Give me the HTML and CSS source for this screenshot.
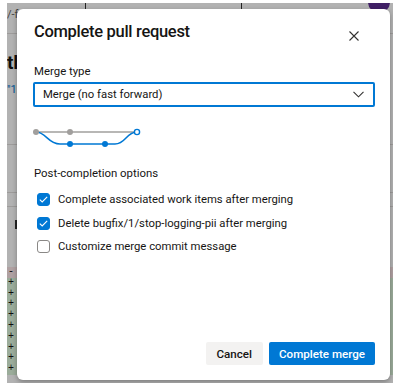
FILE: index.html
```html
<!DOCTYPE html>
<html lang="en">
<head>
  <meta charset="UTF-8">
  <meta name="viewport" content="width=device-width, initial-scale=1.0">
  <title>Complete pull request</title>
  <link rel="stylesheet" href="styles.css">
</head>
<body>
  <div class="screen">

    <!-- App underneath the modal -->
    <div class="app">
      <div class="app-top">
        <div class="tabs">
          <span class="tab"></span>
          <span class="tab wide"></span>
          <span class="avatar"></span>
        </div>
        <div class="app-path">/-feature</div>
      </div>
      <div class="app-title">the pull request</div>
      <div class="app-branch">"1/stop-logging-pii</div>
      <div class="app-row"></div>
      <div class="app-row"></div>
      <div class="app-row short"></div>
      <div class="app-files">
        <span class="file-mark"></span>
      </div>
      <div class="diff">
        <div class="line del">-</div>
        <div class="line add">+</div>
        <div class="line add">+</div>
        <div class="line add">+</div>
        <div class="line add">+</div>
        <div class="line add">+</div>
        <div class="line add">+</div>
        <div class="line add">+</div>
        <div class="line add">+</div>
        <div class="line add">+</div>
      </div>
    </div>

    <!-- Modal -->
    <div class="overlay">
      <div class="dialog">
        <div class="dialog-header">
          <h2>Complete pull request</h2>
          <button class="close" aria-label="Close">
            <svg width="10" height="10" viewBox="0 0 10 10">
              <path d="M0.5 0.5 L9.5 9.5 M9.5 0.5 L0.5 9.5" stroke="#323130" stroke-width="1.1" fill="none"/>
            </svg>
          </button>
        </div>

        <div class="label">Merge type</div>
        <div class="dropdown">
          <span>Merge (no fast forward)</span>
          <svg width="11" height="7" viewBox="0 0 11 7">
            <path d="M0.5 0.8 L5.5 5.8 L10.5 0.8" stroke="#323130" stroke-width="1.1" fill="none"/>
          </svg>
        </div>

        <svg class="merge-graph" width="110" height="26" viewBox="0 0 110 26">
          <path d="M3 10 L101 10" stroke="#a19f9d" stroke-width="1.3" fill="none"/>
          <path d="M3 10 C13 10 15 22 27 22 L82 22 C93 22 93 10 104 10" stroke="#0078d4" stroke-width="1.5" fill="none"/>
          <circle cx="3" cy="10" r="3" fill="#a19f9d"/>
          <circle cx="37" cy="10" r="3" fill="#a19f9d"/>
          <circle cx="37" cy="22" r="3" fill="#0078d4"/>
          <circle cx="72" cy="22" r="3" fill="#0078d4"/>
          <circle cx="104" cy="10" r="2.6" fill="#fff" stroke="#0078d4" stroke-width="1.4"/>
        </svg>

        <div class="label section">Post-completion options</div>

        <div class="options">
          <label class="option">
            <span class="box checked">
              <svg width="9" height="7" viewBox="0 0 9 7"><path d="M0.8 3.6 L3.2 5.9 L8.2 0.9" stroke="#fff" stroke-width="1.1" fill="none"/></svg>
            </span>
            Complete associated work items after merging
          </label>
          <label class="option">
            <span class="box checked">
              <svg width="9" height="7" viewBox="0 0 9 7"><path d="M0.8 3.6 L3.2 5.9 L8.2 0.9" stroke="#fff" stroke-width="1.1" fill="none"/></svg>
            </span>
            Delete bugfix/1/stop-logging-pii after merging
          </label>
          <label class="option">
            <span class="box"></span>
            Customize merge commit message
          </label>
        </div>

        <div class="dialog-footer">
          <button class="btn">Cancel</button>
          <button class="btn primary">Complete merge</button>
        </div>
      </div>
    </div>

  </div>
</body>
</html>
```

FILE: styles.css
```css
* {
  box-sizing: border-box;
}

body {
  margin: 0;
  background-color: #fff;
  font-family: Roboto, "Liberation Sans", sans-serif;
  color: #161514;
}

.screen {
  position: relative;
  margin: 3px 7px;
  height: 380px;
  overflow: hidden;
}

/* app behind the modal */
.app {
  background-color: #fff;
  height: 100%;
  font-size: 11px;
}

.app-top {
  height: 31px;
  border-bottom: 1px solid #e1dfdd;
}

.tabs {
  display: flex;
  align-items: flex-start;
  height: 6px;
}

.tab {
  width: 79px;
  height: 6px;
  border-right: 1px solid #333;
}

.tab.wide {
  width: 156px;
}

.avatar {
  margin-left: auto;
  margin-right: 3px;
  margin-top: -12px;
  width: 22px;
  height: 22px;
  border-radius: 50%;
  background-color: #5c2d91;
}

.app-path {
  line-height: 12px;
  color: #605e5c;
}

.app-title {
  margin-top: 17px;
  font-size: 19px;
  font-weight: 700;
  line-height: 24px;
}

.app-branch {
  margin-top: 8px;
  line-height: 14px;
  color: #0078d4;
}

.app-row {
  height: 48px;
  border-bottom: 1px solid #e1dfdd;
}

.app-row.short {
  height: 14px;
}

.app-files {
  height: 47px;
}

.file-mark {
  display: block;
  margin: 13px 0 0 8px;
  width: 2px;
  height: 9px;
  background-color: #333;
}

.diff {
  font-family: "Liberation Mono", monospace;
  font-size: 10px;
}

.line {
  height: 10.8px;
  line-height: 10.8px;
  padding-left: 1px;
}

.line.del {
  background-color: #fde7e9;
}

.line.add {
  background-color: #dff6dd;
}

.overlay {
  position: absolute;
  inset: 0;
  background-color: rgba(0, 0, 0, 0.3);
  padding: 6px 3px 3px 10px;
}

/* dialog */
.dialog {
  height: 100%;
  display: flex;
  flex-direction: column;
  background-color: #fff;
  border-radius: 6px;
  box-shadow: 0 2px 5px rgba(0, 0, 0, 0.3);
  padding: 11px 15px 15px 16px;
}

.dialog-header {
  display: flex;
  align-items: flex-start;
  justify-content: space-between;
  height: 24px;
}

h2 {
  margin: 0 0 0 1px;
  font-size: 16.5px;
  font-weight: 500;
  line-height: 24px;
  letter-spacing: -0.3px;
}

.close {
  width: 24px;
  height: 24px;
  margin: 4px 9px 0 0;
  padding: 0;
  border: none;
  background: none;
  display: flex;
  align-items: center;
  justify-content: center;
}

.label {
  margin-top: 19px;
  font-size: 11.4px;
  line-height: 16px;
  padding-left: 1px;
}

.label.section {
  margin-top: 17px;
}

.dropdown {
  margin-top: 3px;
  height: 25px;
  border: 2px solid #0078d4;
  border-radius: 2px;
  display: flex;
  align-items: center;
  justify-content: space-between;
  padding: 0 9px 0 8px;
  font-size: 11.3px;
}

.merge-graph {
  display: block;
  margin-top: 15px;
}

.options {
  margin-top: 7px;
}

.option {
  display: flex;
  align-items: center;
  gap: 8px;
  height: 23.5px;
  padding-left: 4px;
  font-size: 11.3px;
}

.box {
  width: 13px;
  height: 13px;
  border: 1px solid #8a8886;
  border-radius: 3px;
  display: flex;
  align-items: center;
  justify-content: center;
}

.box.checked {
  background-color: #0078d4;
  border-color: #0078d4;
}

.dialog-footer {
  margin-top: auto;
  display: flex;
  justify-content: flex-end;
  gap: 6px;
}

.btn {
  height: 23px;
  padding: 0 10px;
  border: none;
  border-radius: 2px;
  background-color: #f3f2f1;
  color: #161514;
  font-family: inherit;
  font-size: 11.6px;
  font-weight: 500;
}

.btn:first-child {
  padding: 0 11px;
}

.btn.primary {
  background-color: #0078d4;
  color: #fff;
}
```
